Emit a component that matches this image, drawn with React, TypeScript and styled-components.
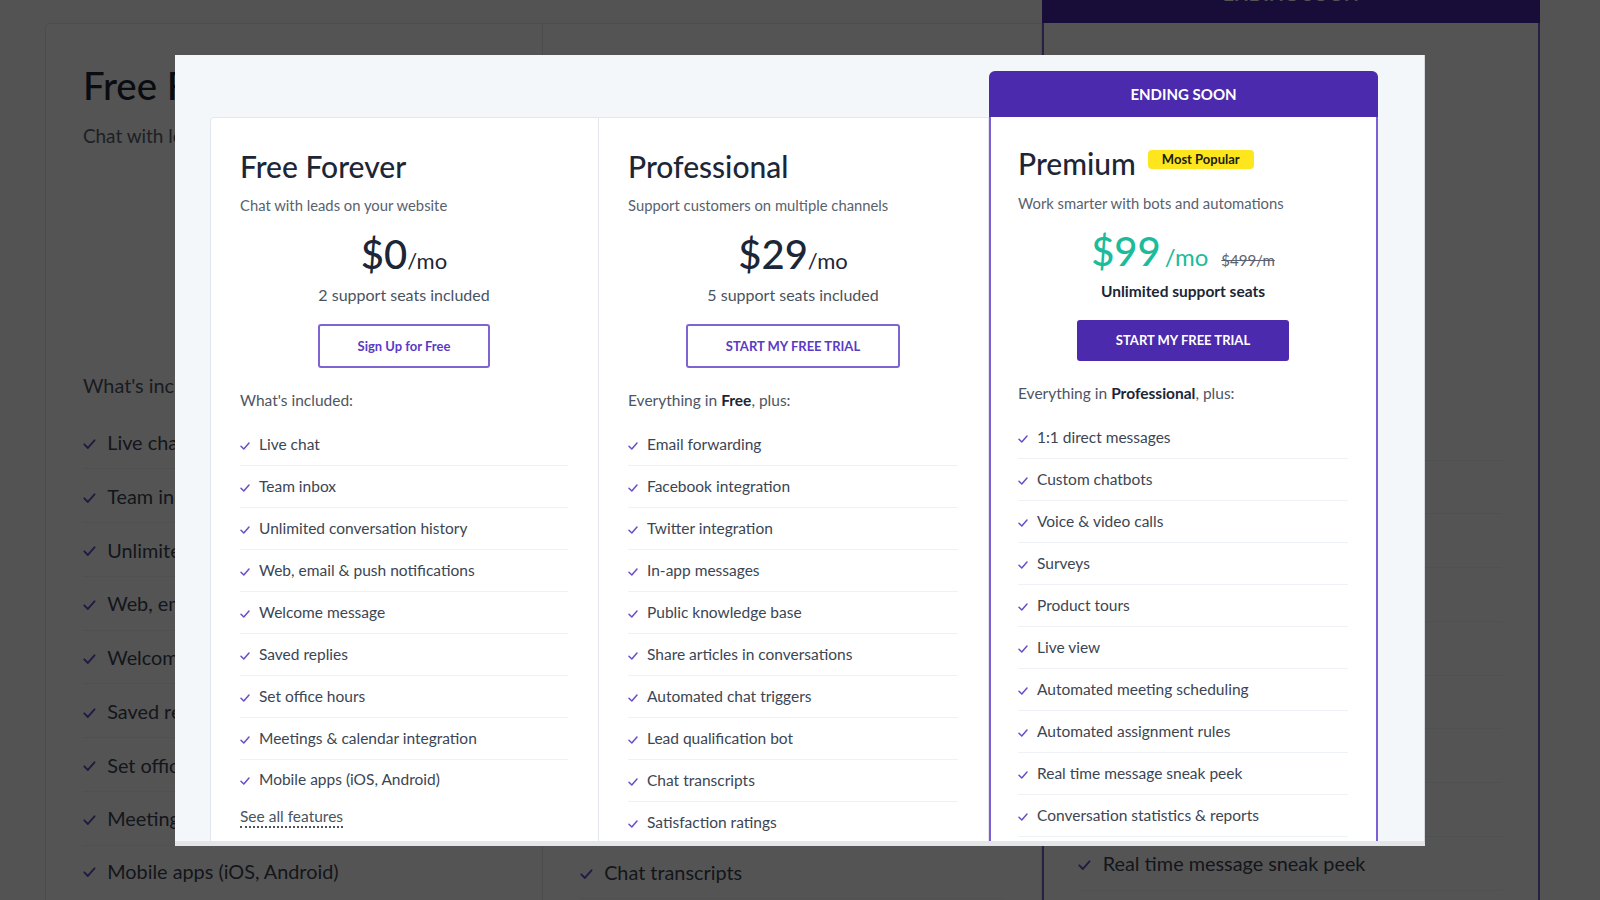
import React, { FC, ReactNode } from 'react';
import styled, { createGlobalStyle } from 'styled-components';

const GlobalStyle = createGlobalStyle`
  html, body {
    margin: 0;
    padding: 0;
    height: 100%;
    overflow: hidden;
  }
  body {
    font-family: Lato, "Open Sans", Arial, sans-serif;
    background: #fbfbfb;
    color: #1c2636;
  }
  * {
    box-sizing: border-box;
  }
`;

interface IPlan {
  title: string;
  badge?: string;
  subtitle: string;
  price: string;
  oldPrice?: string;
  seats: string;
  cta: string;
  lead: ReactNode;
  features: string[];
  seeAll?: boolean;
  featured?: boolean;
}

const plans: IPlan[] = [
  {
    title: 'Free Forever',
    subtitle: 'Chat with leads on your website',
    price: '$0',
    seats: '2 support seats included',
    cta: 'Sign Up for Free',
    lead: <>What's included:</>,
    features: [
      'Live chat',
      'Team inbox',
      'Unlimited conversation history',
      'Web, email & push notifications',
      'Welcome message',
      'Saved replies',
      'Set office hours',
      'Meetings & calendar integration',
      'Mobile apps (iOS, Android)',
    ],
    seeAll: true,
  },
  {
    title: 'Professional',
    subtitle: 'Support customers on multiple channels',
    price: '$29',
    seats: '5 support seats included',
    cta: 'START MY FREE TRIAL',
    lead: <>Everything in <strong>Free</strong>, plus:</>,
    features: [
      'Email forwarding',
      'Facebook integration',
      'Twitter integration',
      'In-app messages',
      'Public knowledge base',
      'Share articles in conversations',
      'Automated chat triggers',
      'Lead qualification bot',
      'Chat transcripts',
      'Satisfaction ratings',
      'Custom branding',
    ],
  },
  {
    title: 'Premium',
    badge: 'Most Popular',
    subtitle: 'Work smarter with bots and automations',
    price: '$99',
    oldPrice: '$499/m',
    seats: 'Unlimited support seats',
    cta: 'START MY FREE TRIAL',
    lead: <>Everything in <strong>Professional</strong>, plus:</>,
    features: [
      '1:1 direct messages',
      'Custom chatbots',
      'Voice & video calls',
      'Surveys',
      'Product tours',
      'Live view',
      'Automated meeting scheduling',
      'Automated assignment rules',
      'Real time message sneak peek',
      'Conversation statistics & reports',
      'Slack integration',
    ],
    featured: true,
  },
];

/* page behind the modal: same grid, bigger */
const BgZoom = styled.div`
  zoom: 1.28;
  margin-top: -28px;
  padding-left: 35px;
`;

const Backdrop = styled.div`
  position: fixed;
  inset: 0;
  background: rgba(0, 0, 0, 0.67);
  display: flex;
  align-items: center;
  justify-content: center;
`;

const Modal = styled.div`
  width: 1250px;
  height: 791px;
  background: #f4f7fa;
  padding: 16px 47px 0 35px;
  overflow: hidden;
  border-bottom: 5px solid #e3e5e8;
  border-right: 1px solid #d4d7db;
`;

const PlanGrid = styled.div`
  display: grid;
  grid-template-columns: 389px 390px 389px;
  align-items: start;
`;

const Column = styled.div<{ $featured?: boolean }>`
  padding-top: ${p => (p.$featured ? 0 : 46)}px;
`;

const Ribbon = styled.div`
  height: 46px;
  background: #4b2aad;
  color: #fff;
  border-radius: 6px 6px 0 0;
  display: flex;
  align-items: center;
  justify-content: center;
  font-size: 15px;
  font-weight: 700;
`;

const Card = styled.div<{ $featured?: boolean; $first?: boolean }>`
  background: #fff;
  border: 1px solid #e3e7ed;
  border-left: ${p => (p.$first ? '1px solid #e3e7ed' : 'none')};
  border-radius: ${p => (p.$first ? '4px 0 0 0' : '0')};
  padding: 30px 30px 24px 29px;

  ${p =>
    p.$featured &&
    `
    border: 2px solid #7c5fd2;
    border-top: none;
    border-radius: 0;
    padding: 28px 28px 24px 27px;
  `}
`;

const TitleRow = styled.div`
  display: flex;
  align-items: center;
  gap: 12px;
`;

const Title = styled.h2`
  margin: 0;
  font-size: 30px;
  line-height: 36px;
  font-weight: 500;
  color: #1c2636;
`;

const Badge = styled.span`
  background: #fde61e;
  color: #1b1b12;
  font-size: 13px;
  font-weight: 700;
  line-height: 19px;
  padding: 0 14px;
  border-radius: 4px;
  margin-top: -7px;
`;

const Subtitle = styled.p<{ $featured?: boolean }>`
  margin: ${p => (p.$featured ? 12 : 11)}px 0 0;
  font-size: 14.8px;
  line-height: 20px;
  color: #59616d;
`;

const PriceRow = styled.div<{ $featured?: boolean }>`
  margin-top: ${p => (p.$featured ? 14 : 15)}px;
  height: 48px;
  display: flex;
  justify-content: center;
  align-items: baseline;
  line-height: 48px;
  color: ${p => (p.$featured ? '#1bbb9b' : '#1c2636')};
`;

const Amount = styled.span`
  font-size: 40px;
  font-weight: 500;
`;

const Unit = styled.span<{ $featured?: boolean }>`
  font-size: ${p => (p.$featured ? 24 : 22)}px;
  line-height: 1;
  margin-left: ${p => (p.$featured ? 4 : 0)}px;
`;

const OldPrice = styled.span`
  font-size: 15px;
  line-height: 1;
  color: #5b626d;
  text-decoration: line-through;
  margin-left: 13px;
`;

const Seats = styled.p<{ $featured?: boolean }>`
  margin: ${p => (p.$featured ? 5 : 6)}px 0 0;
  text-align: center;
  font-size: ${p => (p.$featured ? 15.5 : 16)}px;
  line-height: 22px;
  color: ${p => (p.$featured ? '#1c2636' : '#4a5260')};
  font-weight: ${p => (p.$featured ? 700 : 400)};
`;

const CtaButton = styled.button<{ $featured?: boolean }>`
  display: block;
  margin: 18px auto 0;
  height: ${p => (p.$featured ? 41 : 44)}px;
  padding: 0 ${p => (p.$featured ? 37 : 38)}px;
  border: 2px solid ${p => (p.$featured ? '#4b2aad' : '#7e64d0')};
  border-radius: 3px;
  background: ${p => (p.$featured ? '#4b2aad' : '#fff')};
  color: ${p => (p.$featured ? '#fff' : '#5a3bc4')};
  font-family: inherit;
  font-size: 13px;
  font-weight: 700;
  cursor: pointer;
`;

const Lead = styled.p`
  margin: 21px 0 0;
  font-size: 15.5px;
  line-height: 22px;
  color: #4d5563;

  strong {
    color: #1c2636;
    font-weight: 700;
  }
`;

const FeatureList = styled.ul`
  list-style: none;
  margin: 13px 0 0;
  padding: 0;
`;

const FeatureItem = styled.li`
  display: flex;
  align-items: center;
  gap: 9px;
  height: 42px;
  border-bottom: 1px solid #eef1f5;
  font-size: 15.5px;
  color: #3c4553;

  svg {
    margin-top: 3px;
  }

  &:last-child {
    height: 39px;
    border-bottom: none;
  }
`;

const SeeAll = styled.a`
  display: inline-block;
  margin-top: 8px;
  font-size: 15.5px;
  line-height: 19px;
  color: #4a5361;
  text-decoration: none;
  border-bottom: 2px dotted #4a5361;
`;

const Check: FC = () => (
  <svg width="10" height="8" viewBox="0 0 10 8" fill="none">
    <path d="M1 4.2 L3.8 7 L9 1" stroke="#6a4fc6" strokeWidth="1.5" strokeLinecap="round" strokeLinejoin="round" />
  </svg>
);

const PlanCard: FC<{ plan: IPlan; first?: boolean }> = ({ plan, first }) => {
  const f = plan.featured;
  return (
    <Column $featured={f}>
      {f && <Ribbon>ENDING SOON</Ribbon>}
      <Card $featured={f} $first={first}>
        <TitleRow>
          <Title>{plan.title}</Title>
          {plan.badge && <Badge>{plan.badge}</Badge>}
        </TitleRow>
        <Subtitle $featured={f}>{plan.subtitle}</Subtitle>
        <PriceRow $featured={f}>
          <Amount>{plan.price}</Amount>
          <Unit $featured={f}>/mo</Unit>
          {plan.oldPrice && <OldPrice>{plan.oldPrice}</OldPrice>}
        </PriceRow>
        <Seats $featured={f}>{plan.seats}</Seats>
        <CtaButton $featured={f}>{plan.cta}</CtaButton>
        <Lead>{plan.lead}</Lead>
        <FeatureList>
          {plan.features.map((item, key) => (
            <FeatureItem key={key}>
              <Check />
              {item}
            </FeatureItem>
          ))}
        </FeatureList>
        {plan.seeAll && <SeeAll href="#">See all features</SeeAll>}
      </Card>
    </Column>
  );
};

const Plans: FC = () => (
  <PlanGrid>
    {plans.map((plan, key) => (
      <PlanCard key={key} plan={plan} first={key === 0} />
    ))}
  </PlanGrid>
);

const App: FC = () => {
  return (
    <>
      <GlobalStyle />
      <BgZoom>
        <Plans />
      </BgZoom>
      <Backdrop>
        <Modal>
          <Plans />
        </Modal>
      </Backdrop>
    </>
  );
};

export default App;
